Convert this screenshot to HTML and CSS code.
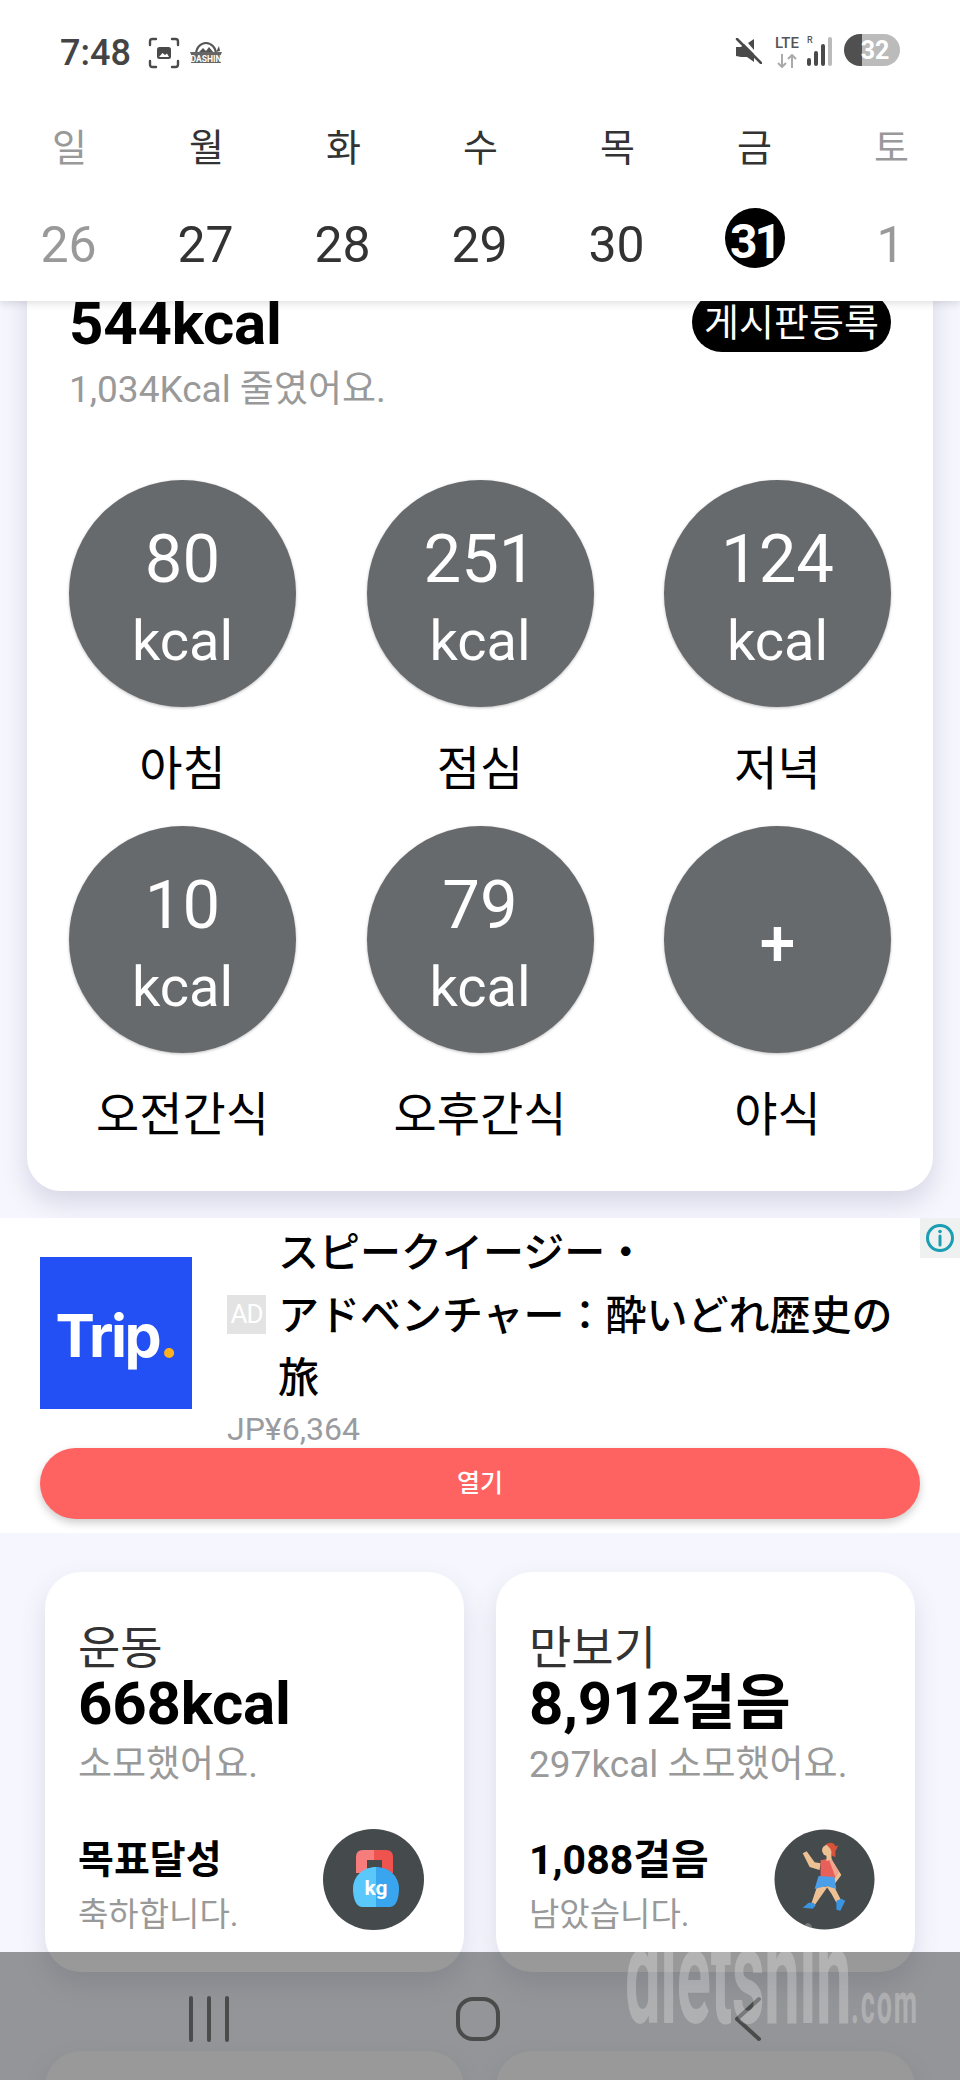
FILE: index.html
```html
<!DOCTYPE html>
<html lang="ko">
<head>
<meta charset="utf-8">
<title>식단</title>
<link rel="stylesheet" href="styles.css">
</head>
<body>
<div class="page">
  <header class="top">
    <div class="status">
      <div class="status-left">
        <span class="time">7:48</span>
        <svg class="ic-shot" viewBox="0 0 32 32" fill="none" stroke="#4a4a4a" stroke-width="2.4" stroke-linecap="round"><path d="M2 8V4.500Q2 2 4.500 2H8M24 2h3.500Q30 2 30 4.500V8M30 24v3.500Q30 30 27.500 30H24M8 30H4.500Q2 30 2 27.500V24"/><rect x="9" y="10" width="14" height="12" rx="2.500" fill="#4a4a4a" stroke="none"/><path d="M11 20l3.500-4 2.500 2 2-1.500 2 3.500z" fill="#fff" stroke="none"/></svg>
        <svg class="ic-dash" viewBox="0 0 32 26"><path d="M6 14a10 11 0 0 1 20 0z" fill="none" stroke="#555" stroke-width="2"/><path d="M8 13l5-5 3 3 3-4 5 6z" fill="#555"/><path d="M29 6l-3 6 4-1z" fill="#555"/><path d="M0 12h32l-2 5 1 6H1l1-6z" fill="#666"/><text x="16" y="21.500" class="dash-text">DASHIN</text></svg>
      </div>
      <div class="status-right">
        <svg class="ic-mute" viewBox="0 0 28 26"><path d="M2 9h5l3-3 10 10v8l-7-5H7l-5-1z" fill="#4a4a4a"/><path d="M14 5l6-4v11z" fill="#4a4a4a"/><path d="M3 1l24 24" stroke="#4a4a4a" stroke-width="2.500" stroke-linecap="round"/></svg>
        <div class="lte"><span class="lte-txt">LTE</span><svg class="ic-arrows" viewBox="0 0 20 14" fill="none" stroke="#aaa" stroke-width="2"><path d="M5 0v13M1 9l4 4 4-4M15 14V1M11 5l4-4 4 4"/></svg></div>
        <svg class="ic-signal" viewBox="0 0 27 30"><text x="1" y="7" class="r-text">R</text><rect x="1" y="22" width="4" height="8" rx="2" fill="#4a4a4a"/><rect x="8" y="15" width="4" height="15" rx="2" fill="#4a4a4a"/><rect x="15" y="8" width="4" height="22" rx="2" fill="#4a4a4a"/><rect x="22" y="1" width="4" height="29" rx="2" fill="#bbb"/></svg>
        <div class="battery"><span class="battery-num">32</span></div>
      </div>
    </div>
    <div class="week">
      <span class="muted">일</span><span>월</span><span>화</span><span>수</span><span>목</span><span>금</span><span class="muted">토</span>
    </div>
    <div class="dates">
      <span class="date muted">26</span><span class="date">27</span><span class="date">28</span><span class="date">29</span><span class="date">30</span><span class="today">31</span><span class="date muted">1</span>
    </div>
  </header>

  <section class="diet">
    <div class="diet-head">
      <div class="diet-kcal">544kcal</div>
      <div class="pill">게시판등록</div>
    </div>
    <div class="diet-sub">1,034Kcal 줄였어요.</div>
    <div class="meals">
      <div class="meal"><div class="disc"><span class="num">80</span><span class="unit">kcal</span></div><div class="meal-name">아침</div></div>
      <div class="meal"><div class="disc"><span class="num">251</span><span class="unit">kcal</span></div><div class="meal-name">점심</div></div>
      <div class="meal"><div class="disc"><span class="num">124</span><span class="unit">kcal</span></div><div class="meal-name">저녁</div></div>
      <div class="meal"><div class="disc"><span class="num">10</span><span class="unit">kcal</span></div><div class="meal-name">오전간식</div></div>
      <div class="meal"><div class="disc"><span class="num">79</span><span class="unit">kcal</span></div><div class="meal-name">오후간식</div></div>
      <div class="meal"><div class="disc disc-plus"><span class="plus">+</span></div><div class="meal-name">야식</div></div>
    </div>
  </section>

  <section class="ad">
    <div class="ad-info"><svg class="ic-info" viewBox="0 0 30 30" fill="none" stroke="#1b9db3" stroke-width="3"><circle cx="15" cy="15" r="12.500"/><path d="M15 13v9" stroke-linecap="round"/><circle cx="15" cy="8.500" r="1.800" fill="#1b9db3" stroke="none"/></svg></div>
    <div class="ad-body">
      <div class="ad-logo"><span>Trip</span><span class="ad-dot">.</span></div>
      <div class="ad-text">
        <div class="ad-title-row">
          <span class="ad-mark">AD</span>
          <div class="ad-title" lang="ja">スピークイージー・<br>アドベンチャー：酔いどれ歴史の<br>旅</div>
        </div>
        <div class="ad-price">JP¥6,364</div>
      </div>
    </div>
    <div class="ad-btn">열기</div>
  </section>

  <section class="tiles">
    <article class="tile">
      <div class="tile-title">운동</div>
      <div class="tile-value">668kcal</div>
      <div class="tile-note">소모했어요.</div>
      <div class="tile-foot">
        <div>
          <div class="tile-goal">목표달성</div>
          <div class="tile-left">축하합니다.</div>
        </div>
        <svg class="tile-icon" viewBox="0 0 101 101">
          <circle cx="50.500" cy="50.500" r="50.500" fill="#454a4c"/>
          <path d="M33 44V28q0-7 7-7h11v10h-7v13z" fill="#f77c7c"/>
          <path d="M70 44V28q0-7-7-7H51v10h8v13z" fill="#ef5350"/>
          <path d="M53 38c-13 0-23 9-23 22 0 9 3 18 9 18h14z" fill="#5ac8fa"/>
          <path d="M53 38c13 0 23 9 23 22 0 9-3 18-9 18H53z" fill="#38a5ee"/>
          <text x="53" y="66" class="kg-text">kg</text>
        </svg>
      </div>
    </article>
    <article class="tile">
      <div class="tile-title">만보기</div>
      <div class="tile-value">8,912걸음</div>
      <div class="tile-note">297kcal 소모했어요.</div>
      <div class="tile-foot">
        <div>
          <div class="tile-goal tile-goal-num">1,088걸음</div>
          <div class="tile-left">남았습니다.</div>
        </div>
        <svg class="tile-icon" viewBox="0 0 102 101">
          <circle cx="51" cy="50.500" r="50.500" fill="#454a4c"/>
          <path d="M29 24l4-2 8 11 6 1-1 7-10-3z" fill="#eec195"/>
          <path d="M60 33l8 13-6 8-4-3 3-6-6-8z" fill="#eec195"/>
          <path d="M44 56l-6 18-4 1 6 3 14-20zM52 56l6 9 5 9 5-2-6-12-1-7z" fill="#eec195"/>
          <path d="M29 79l6-5 5 0 2 3-3 3zM63 81l0-9 5-2 4 2-5 10z" fill="#3b94e0"/>
          <path d="M47 31l10-2 8 14-4 7H47z" fill="#e8605a"/>
          <path d="M55 29l3 0 7 14-3 5z" fill="#f3a48d"/>
          <path d="M45 47l16 1 2 12-10-3-12 3z" fill="#4a9fe8"/>
          <circle cx="54" cy="21" r="5.500" fill="#eec195"/>
          <path d="M52 15q8-4 10 2l3-1-3 6 0 6-4-2q1-7-6-11z" fill="#d9533a"/>
          <path d="M53 25h5v5l-5 2z" fill="#eec195"/>
        </svg>
      </div>
    </article>
    <article class="tile"></article>
    <article class="tile"></article>
  </section>

  <div class="mark"><span class="mark-big">dietshin</span><span class="mark-small">.com</span></div>

  <nav class="nav">
    <svg class="nav-recent" viewBox="0 0 44 46"><path d="M4 2v42M22 2v42M40 2v42"/></svg>
    <svg class="nav-home" viewBox="0 0 46 46"><rect x="3" y="3" width="40" height="40" rx="15"/></svg>
    <svg class="nav-back" viewBox="0 0 30 46"><path d="M26 3L4 23l22 20"/></svg>
  </nav>
</div>
</body>
</html>
```
FILE: styles.css
```css
* { box-sizing: border-box; }
html, body { margin: 0; padding: 0; }
body { font-family: Roboto, "Noto Sans CJK KR", sans-serif; color: #000; background: #f6f6fe; }

.page { position: relative; width: 960px; height: 2080px; overflow: hidden; background: #f6f6fe; }

/* header */
.top { position: relative; z-index: 2; height: 301px; background: #fff; box-shadow: 0 2px 8px rgba(60, 60, 80, .18); }
.status { height: 106px; padding: 36px 60px 0 60px; display: flex; justify-content: space-between; align-items: flex-start; }
.status-left { display: flex; align-items: center; height: 34px; }
.time { font-size: 36px; font-weight: 500; color: #444; width: 88px; white-space: nowrap; }
.ic-shot { width: 32px; height: 32px; }
.ic-dash { width: 32px; height: 26px; margin-left: 10px; }
.dash-text { font: 700 8.500px Roboto, sans-serif; fill: #fff; text-anchor: middle; }
.status-right { display: flex; align-items: flex-start; }
.ic-mute { width: 28px; height: 26px; margin-top: 2px; }
.lte { width: 30px; margin-left: 10px; display: flex; flex-direction: column; align-items: center; }
.lte-txt { font-size: 15px; line-height: 15px; font-weight: 500; color: #555; }
.ic-arrows { width: 20px; height: 14px; margin-top: 3px; }
.ic-signal { width: 27px; height: 30px; margin-left: 4px; }
.r-text { font: 500 9px Roboto, sans-serif; fill: #555; }
.battery { width: 56px; height: 32px; margin-left: 11px; margin-top: -2px; border-radius: 16px; background: linear-gradient(90deg, #505050 0, #505050 32%, #bbb 32%, #bbb 100%); display: flex; justify-content: center; align-items: center; }
.battery-num { font-size: 25px; font-weight: 700; color: #fff; padding-left: 6px; }

.week, .dates { display: grid; grid-template-columns: repeat(7, 137px); padding-left: 1px; justify-items: center; }
.week { height: 102px; padding-top: 17px; font-size: 38px; line-height: 50px; color: #333; }
.dates { height: 70px; font-size: 50px; color: #333; align-items: start; }
.date { line-height: 74px; margin-left: -2px; }
.muted { color: #999; }
.today { width: 60px; height: 60px; padding-top: 9px; border-radius: 50%; background: #000; color: #fff; font-weight: 700; font-size: 48px; line-height: 50px; text-align: center; letter-spacing: -3px; white-space: nowrap; }

/* diet card */
.diet { margin: -40px 27px 0; padding: 31px 42px 46px; background: #fff; border-radius: 0 0 34px 34px; box-shadow: 0 12px 26px rgba(90, 90, 130, .2); }
.diet-head { display: flex; justify-content: space-between; align-items: center; height: 60px; }
.diet-kcal { font-size: 60px; line-height: 60px; font-weight: 700; padding-top: 4px; letter-spacing: -.2px; }
.pill { height: 60px; width: 199px; border-radius: 30px; background: #000; color: #fff; font-size: 38px; line-height: 62px; text-align: center; white-space: nowrap; }
.diet-sub { margin-top: 16px; height: 44px; font-size: 37px; line-height: 44px; color: #999; }
.meals { margin-top: 68px; display: grid; grid-template-columns: repeat(3, 227px); justify-content: space-between; row-gap: 27px; }
.meal { display: flex; flex-direction: column; align-items: center; }
.disc { width: 227px; height: 227px; border-radius: 50%; background: #676a6c; color: #fff; display: flex; flex-direction: column; align-items: center; padding-top: 38px; box-shadow: 0 1px 3px rgba(0, 0, 0, .25); }
.disc-plus { padding-top: 8px; justify-content: center; }
.num { font-size: 67px; line-height: 82px; font-weight: 400; }
.unit { font-size: 56px; line-height: 82px; }
.plus { font-size: 64px; line-height: 70px; font-weight: 500; }
.meal-name { margin-top: 32px; font-size: 47px; line-height: 60px; }

/* ad */
.ad { position: relative; margin-top: 27px; height: 315px; background: #fff; padding: 0 40px; }
.ad-info { position: absolute; top: 0; right: 0; width: 40px; height: 40px; background: #eff0f0; display: flex; align-items: center; justify-content: center; }
.ic-info { width: 30px; height: 30px; }
.ad-body { display: flex; height: 230px; align-items: center; }
.ad-logo { width: 152px; height: 152px; background: #2250f4; color: #fff; font-family: Inter, sans-serif; font-weight: 700; font-size: 59px; letter-spacing: -2.500px; display: flex; align-items: center; justify-content: center; padding-top: 4px; }
.ad-dot { color: #ffb01f; }
.ad-text { margin-left: 35px; height: 230px; }
.ad-title-row { display: flex; align-items: center; height: 188px; }
.ad-mark { width: 39px; height: 39px; margin-top: 4px; background: #e3e3e3; color: #fff; font-size: 26px; line-height: 39px; text-align: center; letter-spacing: -1px; flex: none; }
.ad-title { margin-left: 12px; font-family: "Noto Sans CJK JP", sans-serif; font-size: 41px; line-height: 62.500px; white-space: nowrap; font-weight: 500; }
.ad-price { margin-top: 6px; font-size: 32px; line-height: 34px; color: #999ba0; }
.ad-btn { height: 71px; border-radius: 36px; background: #ff6361; color: #fff; font-size: 25px; font-weight: 500; line-height: 71px; text-align: center; box-shadow: 0 4px 8px rgba(0, 0, 0, .2); }

/* tiles */
.tiles { margin-top: 39px; padding: 0 45px; display: grid; grid-template-columns: 419px 419px; gap: 79px 32px; grid-auto-rows: 400px; }
.tile { background: #fff; border-radius: 36px; padding: 50px 33px 0; box-shadow: 0 12px 26px rgba(90, 90, 130, .16); }
.tile-title { font-size: 46px; line-height: 52px; color: #333; }
.tile-value { font-size: 60px; line-height: 60px; font-weight: 700; letter-spacing: -.2px; }
.tile-note { margin-top: 9px; font-size: 37px; line-height: 44px; color: #999; }
.tile-foot { margin-top: 42px; display: flex; justify-content: space-between; align-items: flex-start; }
.tile-goal { margin-top: 6px; font-size: 39px; line-height: 50px; font-weight: 700; }
.tile-goal-num { font-size: 41px; }
.tile-left { margin-top: 8px; font-size: 33px; line-height: 44px; color: #999; }
.tile-icon { width: 101px; height: 101px; margin-right: 7px; flex: none; }
.kg-text { font: 700 21px Roboto, sans-serif; fill: #fff; text-anchor: middle; }

/* watermark + nav */
.mark { position: absolute; z-index: 4; left: 625px; top: 1917px; width: 620px; height: 120px; font-family: Roboto, sans-serif; font-weight: 700; white-space: nowrap; color: rgba(255, 255, 255, .26); transform: scaleX(.465); transform-origin: 0 0; }
.mark-big { font-size: 136px; line-height: 120px; letter-spacing: -.5px; }
.mark-small { font-size: 58px; line-height: 120px; letter-spacing: 4px; }
.nav { position: absolute; z-index: 3; left: 0; right: 0; bottom: 0; height: 128px; background: rgba(50, 52, 50, .5); }
.nav svg { position: absolute; top: 44px; height: 46px; fill: none; stroke: #4a4c4c; stroke-width: 4; stroke-linecap: round; stroke-linejoin: round; }
.nav-recent { left: 187px; width: 44px; }
.nav-home { left: 455px; width: 46px; }
.nav-back { left: 733px; width: 30px; }
```
